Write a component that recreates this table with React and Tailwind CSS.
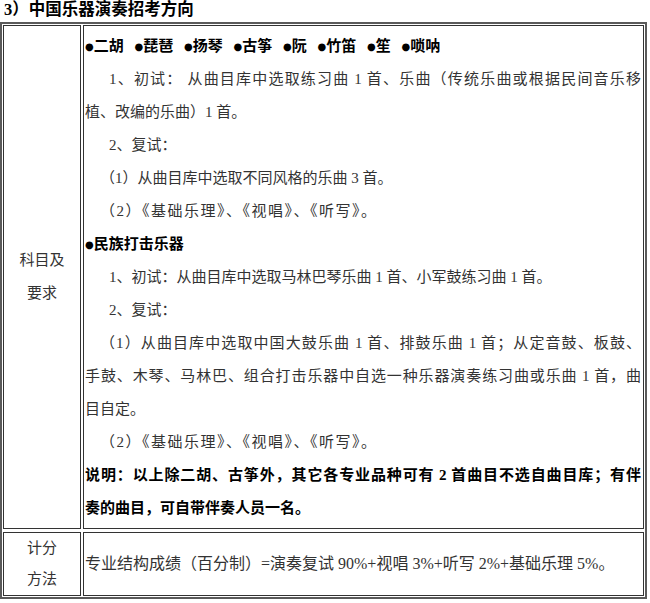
import React from "react";

const Dot = ({ gap }) => (
  <span
    className={`font-['DejaVu_Sans',sans-serif] text-[10px] align-[1px] ${gap ? "ml-[7px]" : ""}`}
  >
    ●
  </span>
);

// one printed line of the document cell
const Line = ({ children, indent, paren, justify, bold, wide }) => (
  <p
    className={`${indent ? "pl-[24px]" : ""} ${paren ? "pl-[15px]" : ""} ${
      justify ? "text-justify [text-align-last:justify]" : "whitespace-nowrap"
    } ${bold ? "font-bold text-black" : ""} ${wide ? "tracking-[1.5px]" : ""}`}
  >
    {children}
  </p>
);

export default function App() {
  return (
    <div className="w-[650px] h-[603px] bg-white font-['Liberation_Serif','Noto_Sans_CJK_SC',serif] text-[15px] text-[#333]">
      <h1 className="pl-[4px] h-[21px] leading-[19px] text-[16.5px] font-bold text-black">
        3）中国乐器演奏招考方向
      </h1>

      <div className="mt-[1px] w-[647px] border-2 border-[#5a5a5a] p-[1px] grid grid-cols-[78px_561px] gap-x-[2px] gap-y-[3px]">
        {/* 科目及要求 */}
        <div className="border border-[#333] flex flex-col items-center justify-center leading-[33px]">
          <span>科目及</span>
          <span>要求</span>
        </div>
        <div className="border border-[#333] pl-[1px] pr-[2px] pt-[4px] pb-[3px] leading-[33px]">
          <Line bold>
            <Dot />二胡 <Dot gap />琵琶 <Dot gap />扬琴 <Dot gap />古筝 <Dot gap />阮 <Dot gap />竹笛{" "}
            <Dot gap />笙 <Dot gap />唢呐
          </Line>
          <Line indent justify>
            1、初试： 从曲目库中选取练习曲 1 首、乐曲（传统乐曲或根据民间音乐移
          </Line>
          <Line>植、改编的乐曲）1 首。</Line>
          <Line indent>2、复试：</Line>
          <Line paren>（1）从曲目库中选取不同风格的乐曲 3 首。</Line>
          <Line paren wide>（2）《基础乐理》、《视唱》、《听写》。</Line>
          <Line bold>
            <Dot />民族打击乐器
          </Line>
          <Line indent>1、初试：从曲目库中选取马林巴琴乐曲 1 首、小军鼓练习曲 1 首。</Line>
          <Line indent>2、复试：</Line>
          <Line paren justify>
            （1）从曲目库中选取中国大鼓乐曲 1 首、排鼓乐曲 1 首；从定音鼓、板鼓、
          </Line>
          <Line justify>
            手鼓、木琴、马林巴、组合打击乐器中自选一种乐器演奏练习曲或乐曲 1 首，曲
          </Line>
          <Line>目自定。</Line>
          <Line paren wide>（2）《基础乐理》、《视唱》、《听写》。</Line>
          <Line bold justify>
            说明：以上除二胡、古筝外，其它各专业品种可有 2 首曲目不选自曲目库；有伴
          </Line>
          <Line bold>奏的曲目，可自带伴奏人员一名。</Line>
        </div>

        {/* 计分方法 */}
        <div className="border border-[#333] flex flex-col items-center justify-center leading-[31px]">
          <span>计分</span>
          <span>方法</span>
        </div>
        <div className="border border-[#333] pl-[1px] flex items-center">
          <p className="whitespace-nowrap text-[16px]">
            专业结构成绩（百分制）=演奏复试 90%+视唱 3%+听写 2%+基础乐理 5%。
          </p>
        </div>
      </div>
    </div>
  );
}
